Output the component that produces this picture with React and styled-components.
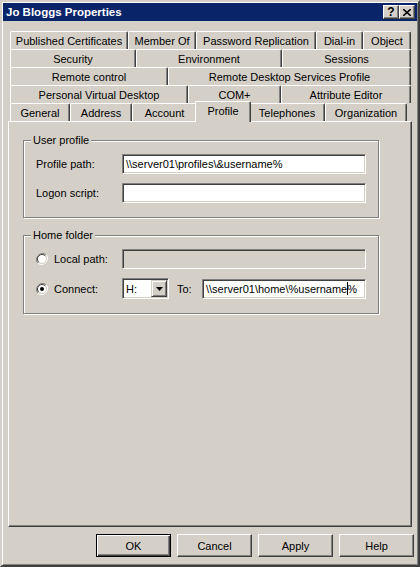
import React from 'react';
import styled, { createGlobalStyle } from 'styled-components';

const GlobalStyle = createGlobalStyle`
    html, body {
        margin: 0;
        padding: 0;
        background: #d4d0c8;
    }
    body {
        font-family: "Liberation Sans", Arial, sans-serif;
        font-size: 11px;
        color: #000;
    }
`;

const Window = styled.div`
    width: 420px;
    height: 567px;
    box-sizing: border-box;
    background: #d4d0c8;
    border: 2px solid;
    border-color: #d4d0c8 #404040 #404040 #d4d0c8;
    box-shadow: inset 1px 1px #fff, inset -1px -1px #808080;
    padding: 1px;
`;

const TitleBar = styled.div`
    height: 18px;
    background: #0a246a;
    display: flex;
    align-items: center;
    justify-content: space-between;
    padding: 0 2px 0 2px;
`;

const Title = styled.div`
    color: #fff;
    font-weight: bold;
    font-size: 11.5px;
    padding-left: 1px;
`;

const CaptionButtons = styled.div`
    display: flex;
`;

const CaptionButton = styled.div`
    width: 16px;
    height: 14px;
    box-sizing: border-box;
    background: #d4d0c8;
    border: 1px solid;
    border-color: #fff #404040 #404040 #fff;
    box-shadow: inset -1px -1px #808080;
    display: flex;
    align-items: center;
    justify-content: center;
    font-weight: bold;
    font-size: 12px;
    line-height: 1;
`;

const Content = styled.div`
    padding: 10px 0 0 5px;
`;

const TabStrip = styled.div`
    margin-left: 2px;
    width: 401px;
`;

const TabRow = styled.div`
    display: flex;
    height: 18px;
`;

const Tab = styled.div`
    flex: none;
    width: ${(p) => p.$w}px;
    height: ${(p) => (p.$active ? 21 : 18)}px;
    margin: ${(p) => (p.$active ? '-2px -2px -1px' : '0')};
    position: relative;
    z-index: ${(p) => (p.$active ? 2 : 1)};
    box-sizing: border-box;
    background: #d4d0c8;
    border-top: 1px solid #fff;
    border-left: 1px solid #fff;
    border-right: 1px solid #404040;
    border-top-left-radius: 2px;
    border-top-right-radius: 2px;
    box-shadow: inset -1px 0 #808080;
    display: flex;
    align-items: center;
    justify-content: center;
    white-space: nowrap;
    padding-bottom: ${(p) => (p.$active ? 2 : 0)}px;
`;

const Panel = styled.div`
    width: 404px;
    height: 406px;
    box-sizing: border-box;
    border: 1px solid;
    border-color: #fff #404040 #404040 #fff;
    box-shadow: inset -1px -1px #808080;
    padding: 18px 0 0 14px;
    position: relative;
    z-index: 1;
`;

const Group = styled.div`
    position: relative;
    width: 356px;
    box-sizing: border-box;
    border: 1px solid #808080;
    box-shadow: inset 1px 1px #fff, 1px 1px #fff;
    padding: 13px 12px 14px 12px;
    display: flex;
    flex-direction: column;
    gap: 9px;
    margin-bottom: 17px;
`;

const Legend = styled.span`
    position: absolute;
    top: -7px;
    left: 7px;
    padding: 0 2px;
    background: #d4d0c8;
    line-height: 13px;
`;

const FieldRow = styled.div`
    display: flex;
    align-items: center;
    height: ${(p) => p.$h || 20}px;
`;

const Label = styled.span`
    width: ${(p) => p.$w}px;
    flex: none;
    white-space: nowrap;
`;

const RadioLabel = styled.label`
    width: 86px;
    flex: none;
    display: flex;
    align-items: center;
    gap: 6px;
    white-space: nowrap;
`;

const TextBox = styled.div`
    width: ${(p) => p.$w}px;
    height: 20px;
    flex: none;
    box-sizing: border-box;
    background: ${(p) => (p.$disabled ? '#d4d0c8' : '#fff')};
    border: 1px solid;
    border-color: #808080 #fff #fff #808080;
    box-shadow: inset 1px 1px #404040, inset -1px -1px #d4d0c8;
    padding: 0 3px;
    display: flex;
    align-items: center;
    white-space: nowrap;
    overflow: hidden;
`;

const Caret = styled.span`
    display: inline-block;
    width: 1px;
    height: 13px;
    background: #000;
    margin: 0 -1px 0 0;
`;

const Combo = styled.div`
    width: 47px;
    height: 21px;
    flex: none;
    box-sizing: border-box;
    background: #fff;
    border: 1px solid;
    border-color: #808080 #fff #fff #808080;
    box-shadow: inset 1px 1px #404040, inset -1px -1px #d4d0c8;
    padding: 2px 2px 2px 3px;
    display: flex;
    align-items: center;
    justify-content: space-between;
`;

const DropButton = styled.div`
    width: 16px;
    height: 17px;
    margin-right: -1px;
    box-sizing: border-box;
    background: #d4d0c8;
    border: 1px solid;
    border-color: #d4d0c8 #404040 #404040 #d4d0c8;
    box-shadow: inset 1px 1px #fff, inset -1px -1px #808080;
    display: flex;
    align-items: center;
    justify-content: center;
`;

const ToLabel = styled.span`
    width: 25px;
    margin-left: 8px;
    flex: none;
`;

const ButtonRow = styled.div`
    display: flex;
    justify-content: flex-end;
    gap: 6px;
    margin-top: 7px;
    padding-right: 3px;
`;

const Button = styled.div`
    width: 75px;
    height: 23px;
    box-sizing: border-box;
    background: #d4d0c8;
    border: 1px solid;
    border-color: ${(p) => (p.$default ? '#000' : '#fff #404040 #404040 #fff')};
    box-shadow: ${(p) =>
        p.$default
            ? 'inset 1px 1px #fff, inset -1px -1px #404040, inset -2px -2px #808080'
            : 'inset -1px -1px #808080'};
    display: flex;
    align-items: center;
    justify-content: center;
`;

const Radio = ({ checked }) => (
    <svg width="12" height="12" viewBox="0 0 12 12">
        <path d="M10.2 1.8 A6 6 0 0 0 1.8 10.2" fill="none" stroke="#808080" strokeWidth="1" />
        <path d="M1.8 10.2 A6 6 0 0 0 10.2 1.8" fill="none" stroke="#fff" strokeWidth="1" />
        <circle cx="6" cy="6" r="4.5" fill="#fff" />
        <path d="M9.2 2.8 A4.5 4.5 0 0 0 2.8 9.2" fill="none" stroke="#404040" strokeWidth="1" />
        <path d="M2.8 9.2 A4.5 4.5 0 0 0 9.2 2.8" fill="none" stroke="#d4d0c8" strokeWidth="1" />
        {checked && <circle cx="6" cy="6" r="2" fill="#000" />}
    </svg>
);

const tabRows = [
    [['Published Certificates', 118], ['Member Of', 68], ['Password Replication', 120], ['Dial-in', 47], ['Object', 48]],
    [['Security', 126], ['Environment', 146], ['Sessions', 129]],
    [['Remote control', 158], ['Remote Desktop Services Profile', 243]],
    [['Personal Virtual Desktop', 178], ['COM+', 93], ['Attribute Editor', 130]],
    [['General', 60], ['Address', 62], ['Account', 65], ['Profile', 56], ['Telephones', 76], ['Organization', 82]],
];

const App = () => {
    return (
        <Window>
            <GlobalStyle />
            <TitleBar>
                <Title>Jo Bloggs Properties</Title>
                <CaptionButtons>
                    <CaptionButton>?</CaptionButton>
                    <CaptionButton>
                        <svg width="8" height="7" viewBox="0 0 8 7">
                            <path d="M0 0 L8 7 M8 0 L0 7" stroke="#000" strokeWidth="1.6" />
                        </svg>
                    </CaptionButton>
                </CaptionButtons>
            </TitleBar>
            <Content>
                <TabStrip>
                    {tabRows.map((row, idx) => (
                        <TabRow key={`row-${idx}`}>
                            {row.map(([name, w]) => (
                                <Tab key={name} $w={w} $active={name === 'Profile'}>
                                    {name}
                                </Tab>
                            ))}
                        </TabRow>
                    ))}
                </TabStrip>
                <Panel>
                    <Group>
                        <Legend>User profile</Legend>
                        <FieldRow>
                            <Label $w={86}>Profile path:</Label>
                            <TextBox $w={244}>\\server01\profiles\&amp;username%</TextBox>
                        </FieldRow>
                        <FieldRow>
                            <Label $w={86}>Logon script:</Label>
                            <TextBox $w={244} />
                        </FieldRow>
                    </Group>
                    <Group>
                        <Legend>Home folder</Legend>
                        <FieldRow>
                            <RadioLabel>
                                <Radio />
                                Local path:
                            </RadioLabel>
                            <TextBox $w={244} $disabled />
                        </FieldRow>
                        <FieldRow $h={21}>
                            <RadioLabel>
                                <Radio checked />
                                Connect:
                            </RadioLabel>
                            <Combo>
                                <span>H:</span>
                                <DropButton>
                                    <svg width="7" height="4" viewBox="0 0 7 4">
                                        <path d="M0 0 H7 L3.5 4 Z" fill="#000" />
                                    </svg>
                                </DropButton>
                            </Combo>
                            <ToLabel>To:</ToLabel>
                            <TextBox $w={164}>
                                \\server01\home\%username<Caret />%
                            </TextBox>
                        </FieldRow>
                    </Group>
                </Panel>
                <ButtonRow>
                    <Button $default>OK</Button>
                    <Button>Cancel</Button>
                    <Button>Apply</Button>
                    <Button>Help</Button>
                </ButtonRow>
            </Content>
        </Window>
    );
};

export default App;
